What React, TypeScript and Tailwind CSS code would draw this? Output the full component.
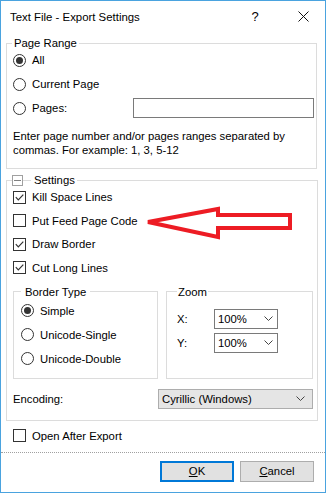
import React from "react"

function Radio({ on }: { on?: boolean }) {
  return (
    <span className="w-[13px] h-[13px] rounded-full border border-[#333333] bg-white flex items-center justify-center shrink-0">
      {on && <span className="w-[7px] h-[7px] rounded-full bg-[#333333]" />}
    </span>
  )
}

function Check({ on }: { on?: boolean }) {
  return (
    <span className="w-[13px] h-[13px] border border-[#333333] bg-white flex items-center justify-center shrink-0">
      {on && (
        <svg width="11" height="11" viewBox="0 0 11 11">
          <path d="M1.8 5.2 L4.3 7.8 L9.3 2.6" stroke="#333333" strokeWidth="1.2" fill="none" />
        </svg>
      )}
    </span>
  )
}

function Chevron() {
  return (
    <svg width="9" height="5" viewBox="0 0 9 5" className="shrink-0">
      <path d="M0.5 0.5 L4.5 4.5 L8.5 0.5" stroke="#444444" strokeWidth="1" fill="none" />
    </svg>
  )
}

function Option({ label, on, radio }: { label: string; on?: boolean; radio?: boolean }) {
  return (
    <div className="h-[20px] flex items-center gap-[6px]">
      {radio ? <Radio on={on} /> : <Check on={on} />}
      <span>{label}</span>
    </div>
  )
}

function Combo({ value }: { value: string }) {
  return (
    <div className="w-[64px] h-[20px] border border-[#7a7a7a] bg-white flex items-center pl-[3px] pr-[4px]">
      <span className="flex-1">{value}</span>
      <Chevron />
    </div>
  )
}

export default function App() {
  return (
    <div className="relative w-[326px] h-[493px] border border-[#4aa3df] bg-white text-black text-[11.3px] leading-[14px] font-['Liberation_Sans',Arial,sans-serif] flex flex-col overflow-hidden">
      {/* Title bar */}
      <div className="h-[31px] flex items-center pl-[9px] shrink-0">
        <span className="flex-1 text-[11.4px]">Text File - Export Settings</span>
        <span className="w-[14px] text-center text-[13px] mr-[35px]">?</span>
        <span className="w-[12px] flex justify-center mr-[16px]">
          <svg width="11" height="11" viewBox="0 0 11 11">
            <path d="M0.5 0.5 L10.5 10.5 M10.5 0.5 L0.5 10.5" stroke="#111111" strokeWidth="1" />
          </svg>
        </span>
      </div>

      {/* Page Range */}
      <fieldset className="ml-[5px] mr-[8px] mt-[4px] border border-[#dcdcdc] pl-[6px] pr-[2px] pb-[11px]">
        <legend className="px-[2px] -ml-[1px]">Page Range</legend>
        <div className="flex flex-col gap-[4px]">
          <Option radio on label="All" />
          <Option radio label="Current Page" />
          <div className="h-[20px] flex items-center">
            <Option radio label="Pages:" />
            <div className="ml-auto w-[181px] h-[20px] border border-[#7a7a7a] bg-white" />
          </div>
        </div>
        <p className="mt-[11px]">
          Enter page number and/or pages ranges separated by
          <br />
          commas. For example: 1, 3, 5-12
        </p>
      </fieldset>

      {/* Settings */}
      <fieldset className="ml-[5px] mr-[8px] mt-[4px] border border-[#dcdcdc] pl-[6px] pr-[4px] pb-[11px]">
        <legend className="-ml-[1px] flex items-center">
          <span className="w-[11px] h-[11px] border border-[#a0a0a0] bg-white flex items-center justify-center">
            <span className="w-[7px] h-px bg-[#808080]" />
          </span>
          <span className="w-[8px] h-px bg-[#dcdcdc]" />
          <span className="pl-[3px] pr-[2px]">Settings</span>
        </legend>
        <div className="flex flex-col gap-[3.5px]">
          <Option on label="Kill Space Lines" />
          <Option label="Put Feed Page Code" />
          <Option on label="Draw Border" />
          <Option on label="Cut Long Lines" />
        </div>

        <div className="mt-[7px] flex gap-[8px]">
          <fieldset className="w-[145px] border border-[#dcdcdc] pl-[7px] pb-[9px]">
            <legend className="px-[4px]">Border Type</legend>
            <div className="flex flex-col gap-[4px] mt-[2px]">
              <Option radio on label="Simple" />
              <Option radio label="Unicode-Single" />
              <Option radio label="Unicode-Double" />
            </div>
          </fieldset>
          <fieldset className="w-[147px] border border-[#dcdcdc] pl-[10px]">
            <legend className="px-px">Zoom</legend>
            <div className="mt-[10px] flex flex-col gap-[4px]">
              <div className="flex items-center">
                <span className="w-[37px]">X:</span>
                <Combo value="100%" />
              </div>
              <div className="flex items-center">
                <span className="w-[37px]">Y:</span>
                <Combo value="100%" />
              </div>
            </div>
          </fieldset>
        </div>

        <div className="mt-[10px] h-[20px] flex items-center">
          <span className="flex-1">Encoding:</span>
          <div className="w-[155px] h-[20px] border border-[#adadad] bg-[#e5e5e5] flex items-center pl-[3px] pr-[7px]">
            <span className="flex-1">Cyrillic (Windows)</span>
            <Chevron />
          </div>
        </div>
      </fieldset>

      <div className="mt-[5px] pl-[12px]">
        <Option label="Open After Export" />
      </div>

      <div className="mt-[6px] border-t border-dotted border-[#a0a0a0]" />

      <div className="mt-[8px] flex justify-end gap-[6px] pr-[11px]">
        <button className="w-[74px] h-[21px] border-2 border-[#0078d7] bg-[#e1e1e1] flex items-center justify-center">
          <span>
            <span className="underline">O</span>K
          </span>
        </button>
        <button className="w-[74px] h-[21px] border border-[#adadad] bg-[#e1e1e1] flex items-center justify-center">
          <span>
            <span className="underline">C</span>ancel
          </span>
        </button>
      </div>

      {/* Red annotation arrow */}
      <svg
        className="absolute left-[139px] top-[199px] pointer-events-none"
        width="160"
        height="45"
        viewBox="0 0 160 45"
      >
        <polygon
          points="8,22 78,9 78,15 150,15 150,28 78,28 78,37"
          fill="none"
          stroke="#ed1c24"
          strokeWidth="4"
          strokeLinejoin="miter"
        />
      </svg>
    </div>
  )
}
